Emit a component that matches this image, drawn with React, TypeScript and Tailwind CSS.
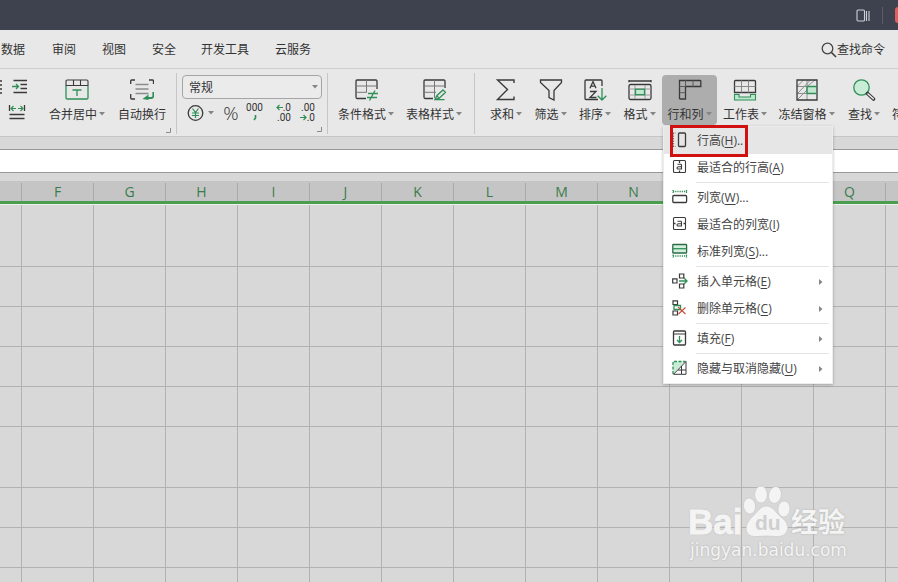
import type { ReactNode } from 'react';
import clsx from 'clsx';

const INK = '#3a3a3a';
const GREEN = '#2f8f57';

const tabs = [
  { label: '数据', className: 'w-[26px]' },
  { label: '审阅', className: 'ml-[25px]' },
  { label: '视图', className: 'ml-[26px]' },
  { label: '安全', className: 'ml-[26px]' },
  { label: '开发工具', className: 'ml-[25px]' },
  { label: '云服务', className: 'ml-[26px]' },
];

// columns under the open menu carry no letter
const columns = ['F', 'G', 'H', 'I', 'J', 'K', 'L', 'M', 'N', '', '', 'Q', ''];
const rowHeights = [62, 40, 40, 40, 40, 61, 40, 40, 15];

const Svg = ({ w = 24, h = 22, children }: { w?: number; h?: number; children: ReactNode }) => (
  <svg width={w} height={h} viewBox={`0 0 ${w} ${h}`} fill="none" stroke={INK} strokeWidth="1.3" className="block shrink-0">
    {children}
  </svg>
);

const Caret = ({ className }: { className?: string }) => (
  <svg width="6" height="4" viewBox="0 0 6 4" className={clsx('shrink-0', className)}>
    <path d="M0 0h6L3 3.500z" fill="#858585" />
  </svg>
);

const Corner = () => (
  <svg width="6" height="6" viewBox="0 0 6 6" fill="none" stroke="#8a8a8a">
    <path d="M0 4.500h4.500V0" />
  </svg>
);

/* Ribbon icons */
const MergeIcon = () => (
  <Svg>
    <path d="M1 7V2.200Q1 1 2.200 1H21.800Q23 1 23 2.200V7M1 6.500H23M8.500 1V6.500M15.500 1V6.500" strokeWidth="1.100" />
    <path d="M1 7V18.800Q1 20 2.200 20H21.800Q23 20 23 18.800V7M7.500 11H16.500M12 11V17" stroke={GREEN} />
  </Svg>
);
const WrapIcon = () => (
  <Svg>
    <path d="M.7 5V2Q.7 1 1.700 1H5M19 1H22.500Q23.500 1 23.500 2V5M.7 15V19Q.7 20 1.700 20H5" />
    <path d="M5.500 5.500H18.500M5.500 10H18.500M5.500 14.500H18.500" stroke="#8b8b8b" />
    <path d="M23.300 13V17Q23.300 19 21.300 19H16" stroke={GREEN} strokeWidth="1.800" />
    <path d="M12.500 20L18.500 15.500V21Z" fill={GREEN} stroke="none" />
  </Svg>
);
const CondIcon = () => (
  <Svg>
    <path d="M23 10V2.200Q23 1 22 1H3Q2 1 2 2V18Q2 19.500 3 19.500H12" />
    <path d="M2 7H23M2 13.300H13M12.500 1V13" stroke="#777" strokeWidth="1" />
    <path d="M14 14.500H24M13 18.500H23M21 11.500L15.500 21.500" stroke={GREEN} />
  </Svg>
);
const TableStyleIcon = () => (
  <Svg>
    <path d="M23 9V2.200Q23 1 22 1H3Q2 1 2 2V18Q2 19.500 3 19.500H11" />
    <path d="M2 7H23M2 13.300H14M12.500 1V19" stroke="#777" strokeWidth="1" />
    <path d="M13 20.500L15 16.500L21 11L23.500 13.300L17 19.500ZM15 16.500L17 19.500M13 20.700H22.500" stroke={GREEN} />
  </Svg>
);
const SumIcon = () => (
  <Svg>
    <path d="M20 4V1H3.500L13.500 10.500L3.500 20.500H20V17.500" strokeWidth="1.400" />
  </Svg>
);
const FilterIcon = () => (
  <Svg>
    <path d="M1.500 1H22.500V3.500L15 11.500V21L10 18.500V11.500L1.500 3.500Z" />
  </Svg>
);
const SortIcon = () => (
  <Svg>
    <path d="M15 20.500H3Q2 20.500 2 19.500V2Q2 1 3 1H18Q19 1 19 2V7" />
    <path d="M7 9.300L10 2.500L13 9.300M8 7.200H12" />
    <path d="M7 12.500H13L7 18.500H13.500" />
    <path d="M19 9V21M14.700 16.700L19 21L23.300 16.700" stroke={GREEN} />
  </Svg>
);
const FormatIcon = () => (
  <Svg>
    <path d="M1 1V3.200M1 2H23M23 1V3.200" />
    <rect x="1" y="5.500" width="22" height="15" rx="1.500" />
    <path d="M1 10H23M1 16H23M7 6V20M17 6V20" stroke="#9a9a9a" strokeWidth="1" />
    <rect x="7.500" y="10.200" width="9" height="5.500" fill="#c2e8d2" stroke={GREEN} />
  </Svg>
);
const RowColIcon = () => (
  <Svg>
    <path d="M1.500 1.500H22Q22.800 1.500 22.800 2.300V7.500H7.500V20H2.300Q1.500 20 1.500 19Z" />
    <path d="M7.500 1.500V7.500H1.500M15 1.500V7.500M1.500 13.700H7.500" stroke="#5c5c5c" strokeWidth="1" />
  </Svg>
);
const SheetIcon = () => (
  <Svg>
    <path d="M1.500 13.500V2.500Q1.500 1.500 2.500 1.500H21.500Q22.500 1.500 22.500 2.500V13.500Z" />
    <path d="M1.500 7.500H22.500M8.500 1.500V13.500M15.500 1.500V13.500" stroke="#888" strokeWidth="1" />
    <path d="M1.500 15.500V21H22.500V15.500H17.500V18H6V15.500Z" fill="#bfe6cf" stroke={GREEN} strokeWidth="1.100" />
  </Svg>
);
const FreezeIcon = () => (
  <Svg>
    <rect x="12" y="7.500" width="9.500" height="7" fill="#bfe6cf" stroke="none" />
    <path d="M2 7.500H22M2 14.500H22M12 1V21M2 7.500L8.500 1M3 14L15.500 1M2 21L12 11M12 7.500L20 1" stroke="#8e8e8e" strokeWidth="1" />
    <path d="M2 1H22V21H2Z" />
    <path d="M12 7.500H22M12 14.500H22M12 7.500V14.500" stroke={GREEN} />
  </Svg>
);
const FindIcon = () => (
  <Svg>
    <circle cx="9.500" cy="8.500" r="7.700" fill="#c9ecd7" stroke={GREEN} />
    <path d="M15.500 14.500L21.500 20" stroke={INK} strokeWidth="3.600" strokeLinecap="round" />
    <path d="M16 15L21.300 19.800" stroke="#eee" strokeWidth="1.500" strokeLinecap="round" />
  </Svg>
);
const SymbolIcon = () => (
  <Svg>
    <path d="M8 3Q3 5 3 11Q3 16 7 19H3" />
    <path d="M16 3Q21 5 21 11Q21 16 17 19H21" />
  </Svg>
);

type ToolProps = { icon: ReactNode; label: string; width: string; caret?: boolean; active?: boolean };

const Tool = ({ icon, label, width, caret = true, active }: ToolProps) => (
  <button
    className={clsx('mt-[6px] flex h-[50px] shrink-0 flex-col items-center rounded-[4px] pt-1', width, active && 'bg-[#adadad]')}
  >
    {icon}
    <span className="mt-[5px] flex items-center whitespace-nowrap leading-[17px]">
      {label}
      {caret && <Caret className="-mt-[2px] ml-[2px]" />}
    </span>
  </button>
);

const Divider = () => <div className="mt-1 h-[61px] w-px shrink-0 bg-[#c6c6c6]" />;

/* Menu icons */
const RowHeightIcon = () => (
  <Svg w={16} h={16}>
    <path d="M1.500 1V15M1 1H4M1 14.500H4" stroke="#666" strokeDasharray="1.200 1.300" strokeWidth="1.100" />
    <rect x="6.500" y="1" width="7" height="13.500" rx="1" />
  </Svg>
);
const FitRowIcon = () => (
  <Svg w={16} h={16}>
    <rect x="1.500" y="1.500" width="12" height="12" rx="1" strokeWidth="1.100" />
    <path d="M7.500 1.500V4M7.500 11.500V14" />
    <path d="M5.500 5.300H8.700Q9.500 5.300 9.500 6.200V10H6Q5 10 5 8.900Q5 7.700 6.500 7.700H9.500" strokeWidth="1.100" />
  </Svg>
);
const FitColIcon = () => (
  <Svg w={16} h={16}>
    <rect x="1.500" y="1.500" width="12" height="12" rx="1" strokeWidth="1.100" />
    <path d="M1.500 7.500H3.500M11.500 7.500H13.500" />
    <path d="M5.500 5.300H8.700Q9.500 5.300 9.500 6.200V10H6Q5 10 5 8.900Q5 7.700 6.500 7.700H9.500" strokeWidth="1.100" />
  </Svg>
);
const ColWidthIcon = () => (
  <Svg w={16} h={16}>
    <path d="M1 1V4M14.500 1V4M1 2.500H15" stroke={GREEN} strokeDasharray="1.200 1" />
    <rect x=".8" y="6.500" width="13.800" height="7" rx="1" />
  </Svg>
);
const StdWidthIcon = () => (
  <Svg w={16} h={16}>
    <rect x=".8" y="1.500" width="13.800" height="8.500" rx=".5" fill="#d3f0df" stroke="#2c6b46" />
    <path d="M1 5.700H14.500" stroke={GREEN} />
    <path d="M1 11.500V14.500M14.500 11.500V14.500M1 13H15" stroke={GREEN} strokeDasharray="1.200 1" />
  </Svg>
);
const InsertIcon = () => (
  <Svg w={16} h={16}>
    <path d="M.7 5.800H5V10H.7ZM7.500 1H11.800V5H7.500ZM7.500 11H11.800V15H7.500Z" strokeWidth="1.200" />
    <path d="M7 8H15M11.700 4.800L15 8L11.700 11.200" stroke={GREEN} />
  </Svg>
);
const DeleteIcon = () => (
  <Svg w={16} h={16}>
    <path d="M1 .8H5.500V4.500H1ZM1 11H5.500V15H1Z" strokeWidth="1.200" />
    <path d="M2 5.500H8.500V9.500H2Z" stroke={GREEN} />
    <path d="M6 7L13.500 14M13.500 7.500L6.500 14" stroke="#c8503c" strokeWidth="1.100" />
  </Svg>
);
const FillIcon = () => (
  <Svg w={16} h={16}>
    <rect x="1.500" y="1" width="12" height="14" rx="1" />
    <path d="M1.500 4H13.500" strokeWidth="1" />
    <path d="M7.500 6V12.500M5 10L7.500 12.500L10 10" stroke={GREEN} />
  </Svg>
);
const HideIcon = () => (
  <Svg w={16} h={16}>
    <path d="M1 14V1.500H13.500Z" fill="#c9ecd7" stroke="none" />
    <path d="M1 14V1.500H13.500" stroke={GREEN} strokeDasharray="3 1.500" />
    <path d="M1.500 14.300L14 1.500V14.300ZM6 10H14M9.500 6V14" strokeWidth="1" />
  </Svg>
);

type MenuEntry = { icon: ReactNode; label: string; hotkey: string; dots?: string; sub?: boolean; active?: boolean };

const menuGroups: MenuEntry[][] = [
  [
    { icon: <RowHeightIcon />, label: '行高', hotkey: 'H', dots: '..', active: true },
    { icon: <FitRowIcon />, label: '最适合的行高', hotkey: 'A' },
  ],
  [
    { icon: <ColWidthIcon />, label: '列宽', hotkey: 'W', dots: '...' },
    { icon: <FitColIcon />, label: '最适合的列宽', hotkey: 'I' },
    { icon: <StdWidthIcon />, label: '标准列宽', hotkey: 'S', dots: '...' },
  ],
  [
    { icon: <InsertIcon />, label: '插入单元格', hotkey: 'E', sub: true },
    { icon: <DeleteIcon />, label: '删除单元格', hotkey: 'C', sub: true },
  ],
  [{ icon: <FillIcon />, label: '填充', hotkey: 'F', sub: true }],
  [{ icon: <HideIcon />, label: '隐藏与取消隐藏', hotkey: 'U', sub: true }],
];

const RowColMenu = () => (
  <div className="absolute top-[126px] left-[663px] w-[170px] border border-[#ececec] bg-white pb-px shadow-[0_1px_3px_rgba(0,0,0,0.25)]">
    {menuGroups.map((group, i) => (
      <div key={i}>
        {i > 0 && <div className="my-px mr-[3px] ml-8 h-px bg-[#e4e4e4]" />}
        {group.map((item) => (
          <div key={item.label} className={clsx('flex h-[27px] items-center pl-2', item.active && 'bg-[#e6e6e6]')}>
            <div className="-mt-[2px]">{item.icon}</div>
            <span className="ml-[9px] whitespace-nowrap text-[#444]">
              {item.label}(<u className="underline-offset-2">{item.hotkey}</u>){item.dots}
            </span>
            {item.sub && (
              <svg width="4" height="6" viewBox="0 0 4 6" className="mr-[9px] ml-auto">
                <path d="M0 0v6l3.500-3z" fill="#858585" />
              </svg>
            )}
          </div>
        ))}
      </div>
    ))}
    {/* highlight frame around the first entry */}
    <div className="absolute -top-[2px] left-[6px] h-[32px] w-[78px] border-3 border-[#d0110f]" />
  </div>
);

const Watermark = () => (
  <div className="absolute top-[484px] left-[688px] h-[80px] w-[165px] text-[#f4f4f4] [text-shadow:0_0_2px_#aaa]">
    <div className="absolute top-[18px] left-0 font-['Liberation_Sans',sans-serif] text-[35px] leading-[40px] font-bold [-webkit-text-stroke:0.8px_#f4f4f4]">Bai</div>
    <svg width="50" height="54" viewBox="0 0 50 54" className="absolute top-0 left-[54px]" fill="#f4f4f4" stroke="#c4c4c4" strokeWidth=".6">
      <ellipse cx="7.500" cy="22" rx="6" ry="8" transform="rotate(-8 7.500 22)" />
      <ellipse cx="19" cy="10.500" rx="6.300" ry="8.500" />
      <ellipse cx="33" cy="11" rx="6.300" ry="8.500" transform="rotate(12 33 11)" />
      <ellipse cx="42" cy="25" rx="6" ry="8" transform="rotate(4 42 25)" />
      <path d="M24.500 22C31 22 34 29 39 33C46 38 48 45 43 50C39 54 32 52 24.500 52C17 52 10 54 6 50C2 44 5 38 10 33C15 29 18 22 24.500 22Z" />
    </svg>
    <div className="absolute top-[25px] left-[67px] font-['Liberation_Sans',sans-serif] text-[21px] leading-[28px] font-bold text-[#cfcfcf] [text-shadow:none]">du</div>
    <div className="absolute top-[22px] left-[103px] text-[27px] leading-[32px] font-bold whitespace-nowrap">经验</div>
    <div className="absolute top-[56px] left-[2px] font-['DejaVu_Sans',sans-serif] text-[17px] leading-[20px] whitespace-nowrap">
      jingyan.baidu.com
    </div>
  </div>
);

export default function App() {
  return (
    <div className="relative flex h-[582px] w-[898px] flex-col overflow-hidden bg-[#d8d8d8] font-['Open_Sans','Noto_Sans_CJK_SC',sans-serif] text-[12px] text-[#333]">
      {/* Title bar */}
      <header className="flex h-[30px] shrink-0 items-center justify-end bg-[#3e414e]">
        <svg width="14" height="13" viewBox="0 0 14 13" fill="none" stroke="#cfd0d5" strokeWidth="1.100">
          <rect x="1" y="1" width="7.500" height="11" rx="1" />
          <path d="M10.500 2v10M13 2v10" />
        </svg>
        <div className="ml-[12px] h-[17px] w-px bg-[#5a5d69]" />
        <div className="ml-[12px] h-4 w-[3px] rounded-l-full bg-[#e0605f]" />
      </header>

      {/* Ribbon tabs */}
      <nav className="flex h-[38px] shrink-0 items-center bg-[#e8e8e8] pt-[2px] pl-px">
        {tabs.map((tab) => (
          <span key={tab.label} className={clsx('whitespace-nowrap', tab.className)}>{tab.label}</span>
        ))}
        <div className="mr-[13px] ml-auto flex items-center pb-px">
          <svg width="16" height="16" viewBox="0 0 16 16" fill="none" stroke="#444" strokeWidth="1.300">
            <circle cx="6.500" cy="6.500" r="5.300" />
            <path d="M10.500 10.500L15 15" strokeWidth="1.700" />
          </svg>
          <span>查找命令</span>
        </div>
      </nav>

      {/* Ribbon */}
      <div className="flex h-[69px] shrink-0 border-t border-b border-t-[#cfcfcf] border-b-[#c6c6c6] bg-[#e8e8e8]">
        <div className="flex w-[176px] shrink-0">
          <div className="flex w-[44px] flex-col pt-[10px]">
            <div className="flex justify-between pr-4">
              <Svg w={3} h={16}>
                <path d="M0 2H2M0 6H2M0 10H2M0 14H2" />
              </Svg>
              <Svg w={16} h={16}>
                <path d="M1.500 1.500H15M8.500 5.500H15M8.500 9.500H15M1.500 13.500H15" />
                <path d="M0 7.500H6.500M4 5L6.500 7.500L4 10" stroke={GREEN} />
              </Svg>
            </div>
            <div className="mt-[10px] ml-[8px]">
              <Svg w={18} h={16}>
                <path d="M1.500 0V6M16.500 0V6M1.500 9.500H16.500M1.500 13.500H16.500" />
                <path d="M3 3.500H8M5.500 1L3 3.500L5.500 6M10 3.500H15M12.500 1L15 3.500L12.500 6" stroke={GREEN} strokeWidth="1.100" />
              </Svg>
            </div>
          </div>
          <Tool icon={<MergeIcon />} label="合并居中" width="w-[66px]" />
          <Tool icon={<WrapIcon />} label="自动换行" width="w-[64px]" caret={false} />
          <div className="-ml-2 self-end pb-[2px]"><Corner /></div>
        </div>
        <Divider />

        <div className="flex w-[150px] shrink-0 flex-col pl-[5px]">
          <div className="mt-[6px] flex h-[24px] w-[140px] items-center justify-between rounded-[4px] border border-[#a5a5a5] bg-[#ebebeb] pr-[3px] pl-1.5">
            <span className="pt-[2px]">常规</span>
            <Caret />
          </div>
          <div className="mt-[3px] flex h-[21px] items-center">
            <Svg w={24} h={18}>
              <circle cx="13.500" cy="9" r="7.300" />
              <path d="M10.500 4.500L13.500 8.500L16.500 4.500M10 9H17M10 11.500H17M13.500 8.500V14" stroke={GREEN} strokeWidth="1.200" />
            </Svg>
            <Caret className="ml-[2px]" />
            <span className="ml-[7px] w-[20px] text-center font-['Open_Sans',sans-serif] text-[19px] leading-5 font-light">%</span>
            <div className="ml-[5px] flex w-[17px] flex-col items-center font-['Roboto',sans-serif] text-[10px] leading-[10px]">
              <span>000</span>
              <svg width="6" height="9" viewBox="0 0 6 9" fill="none" stroke={GREEN} strokeWidth="1.600">
                <path d="M3.500 2V5L2 7" />
              </svg>
            </div>
            <div className="ml-[11px] flex w-[17px] flex-col items-end font-['Roboto',sans-serif] text-[10px] leading-[10px]">
              <span className="flex items-center">
                <svg width="7" height="7" viewBox="0 0 7 7" fill="none" stroke={GREEN} strokeWidth="1.200"><path d="M7 3.500H1M3.500 1L1 3.500L3.500 6" /></svg>.0
              </span>
              <span>.00</span>
            </div>
            <div className="ml-[7px] flex w-[17px] flex-col items-end font-['Roboto',sans-serif] text-[10px] leading-[10px]">
              <span>.00</span>
              <span className="flex items-center">
                <svg width="7" height="7" viewBox="0 0 7 7" fill="none" stroke={GREEN} strokeWidth="1.200"><path d="M0 3.500H6M3.500 1L6 3.500L3.500 6" /></svg>.0
              </span>
            </div>
          </div>
          <div className="mt-[4px] mr-1 self-end"><Corner /></div>
        </div>
        <Divider />

        <div className="flex w-[146px] shrink-0 pl-[4px]">
          <Tool icon={<CondIcon />} label="条件格式" width="w-[68px]" />
          <Tool icon={<TableStyleIcon />} label="表格样式" width="w-[68px]" />
        </div>
        <Divider />

        <div className="flex shrink-0 pl-[9px]">
          <Tool icon={<SumIcon />} label="求和" width="w-[44px]" />
          <Tool icon={<FilterIcon />} label="筛选" width="w-[45px]" />
          <Tool icon={<SortIcon />} label="排序" width="w-[44px]" />
          <Tool icon={<FormatIcon />} label="格式" width="w-[45px]" />
          <Tool icon={<RowColIcon />} label="行和列" width="w-[55px]" active />
          <Tool icon={<SheetIcon />} label="工作表" width="w-[56px]" />
          <Tool icon={<FreezeIcon />} label="冻结窗格" width="w-[67px]" />
          <Tool icon={<FindIcon />} label="查找" width="w-[48px]" />
          <Tool icon={<SymbolIcon />} label="符号" width="w-[40px]" />
        </div>
      </div>

      {/* Formula bar */}
      <div className="mt-[12px] h-6 shrink-0 border-y border-[#999] bg-white" />

      {/* Column headers */}
      <div className="mt-[8px] flex h-[20px] shrink-0 bg-[#c5c5c5] pt-[2px] text-[14px] leading-[18px] text-[#3b7c4c]">
        <div className="w-[22px] shrink-0 border-r border-[#aaa]" />
        {columns.map((name, i) => (
          <div key={i} className="w-[72px] shrink-0 border-r border-[#aaa] text-center">{name}</div>
        ))}
      </div>
      <div className="h-[4px] shrink-0 border-b border-[#eaf2ea] bg-[#4b9e50]" />

      {/* Cells */}
      {rowHeights.map((height, r) => (
        <div key={r} className="flex shrink-0 border-b border-[#b2b2b2]" style={{ height }}>
          <div className="w-[22px] shrink-0 border-r border-[#b2b2b2]" />
          {columns.map((_, i) => (
            <div key={i} className="w-[72px] shrink-0 border-r border-[#b2b2b2]" />
          ))}
        </div>
      ))}

      <RowColMenu />
      <Watermark />
    </div>
  );
}
